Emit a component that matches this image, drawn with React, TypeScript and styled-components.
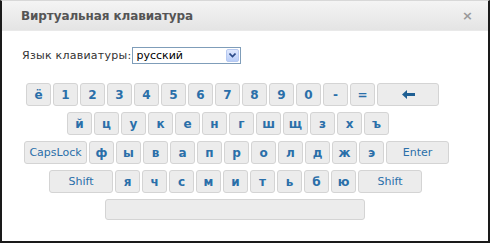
import { FC } from "react";
import styled, { createGlobalStyle } from "styled-components";

const GlobalStyle = createGlobalStyle`
  html, body {
    margin: 0;
    padding: 0;
    background: #ffffff;
  }
  body {
    font-family: "DejaVu Sans", Verdana, sans-serif;
  }
`;

const Window = styled.div`
  box-sizing: border-box;
  width: 490px;
  height: 243px;
  border: 2px solid #1a1a1a;
  border-top: 1px solid #d8d8d8;
  background: #ffffff;
  display: flex;
  flex-direction: column;
`;

const TitleBar = styled.div`
  height: 29px;
  flex-shrink: 0;
  display: flex;
  align-items: center;
  justify-content: space-between;
  padding: 0 15px 0 19px;
  background: linear-gradient(#f4f4f4, #e4e4e4);
  border-bottom: 1px solid #e9e9e9;
`;

const Title = styled.span`
  font-family: "DejaVu Sans", Tahoma, sans-serif;
  font-weight: bold;
  font-size: 12px;
  color: #555555;
  letter-spacing: -0.1px;
`;

const Close = styled.span`
  font-family: "DejaVu Sans", sans-serif;
  font-weight: bold;
  font-size: 13px;
  color: #9a9a9a;
  line-height: 1;
`;

const Body = styled.div`
  padding: 16px 0 0 0;
  display: flex;
  flex-direction: column;
`;

const LangRow = styled.div`
  display: flex;
  align-items: center;
  padding-left: 20px;
  height: 17px;
`;

const Label = styled.span`
  font-size: 11px;
  color: #333333;
  letter-spacing: 0.25px;
`;

const SelectBox = styled.div`
  box-sizing: border-box;
  margin-left: 1px;
  width: 109px;
  height: 17px;
  border: 1px solid #7f9db9;
  display: flex;
  align-items: center;
  justify-content: space-between;
  padding: 1px 1px 1px 3px;
  background: #fff;
`;

const SelectText = styled.span`
  font-size: 11px;
  color: #000;
  line-height: 1;
`;

const SelectArrow = styled.span`
  box-sizing: border-box;
  width: 13px;
  height: 13px;
  border: 1px solid #b7c9f0;
  border-radius: 2px;
  background: linear-gradient(#dfe8fd, #b9cdf8);
  display: flex;
  align-items: center;
  justify-content: center;
`;

const Keyboard = styled.div`
  margin-top: 19px;
  display: flex;
  flex-direction: column;
  gap: 6px;
`;

const Row = styled.div<{ $indent: number }>`
  display: flex;
  gap: 2px;
  padding-left: ${(p) => p.$indent}px;
`;

const Key = styled.div<{ $w?: number; $h?: number; $plain?: boolean }>`
  box-sizing: border-box;
  width: ${(p) => p.$w ?? 25}px;
  height: ${(p) => p.$h ?? 23}px;
  border: 1px solid #d4d4d4;
  border-radius: 3px;
  background: #ececec;
  display: flex;
  align-items: center;
  justify-content: center;
  color: #2a6fa9;
  font-family: "DejaVu Sans", Tahoma, sans-serif;
  font-weight: ${(p) => (p.$plain ? "normal" : "bold")};
  font-size: ${(p) => (p.$plain ? 11 : 12)}px;
  line-height: 1;
`;

const BackArrow: FC = () => (
  <svg width="13" height="9" viewBox="0 0 13 9">
    <path d="M0 4.5 L5 0 L5 3 L13 3 L13 6 L5 6 L5 9 Z" fill="#1f5f93" />
  </svg>
);

const ChevronDown: FC = () => (
  <svg width="7" height="5" viewBox="0 0 7 5">
    <path d="M0.5 0.5 L3.5 3.5 L6.5 0.5" stroke="#2b4a88" strokeWidth="1.6" fill="none" />
  </svg>
);

const row1 = ["ё", "1", "2", "3", "4", "5", "6", "7", "8", "9", "0", "-", "="];
const row2 = ["й", "ц", "у", "к", "е", "н", "г", "ш", "щ", "з", "х", "ъ"];
const row3 = ["ф", "ы", "в", "а", "п", "р", "о", "л", "д", "ж", "э"];
const row4 = ["я", "ч", "с", "м", "и", "т", "ь", "б", "ю"];

const App: FC = () => {
  return (
    <>
      <GlobalStyle />
      <Window>
        <TitleBar>
          <Title>Виртуальная клавиатура</Title>
          <Close>×</Close>
        </TitleBar>
        <Body>
          <LangRow>
            <Label>Язык клавиатуры:</Label>
            <SelectBox>
              <SelectText>русский</SelectText>
              <SelectArrow>
                <ChevronDown />
              </SelectArrow>
            </SelectBox>
          </LangRow>
          <Keyboard>
            <Row $indent={24}>
              {row1.map((k) => (
                <Key key={k}>{k}</Key>
              ))}
              <Key $w={62}>
                <BackArrow />
              </Key>
            </Row>
            <Row $indent={65}>
              {row2.map((k) => (
                <Key key={k}>{k}</Key>
              ))}
            </Row>
            <Row $indent={22}>
              <Key $w={63} $plain>
                CapsLock
              </Key>
              {row3.map((k) => (
                <Key key={k}>{k}</Key>
              ))}
              <Key $w={63} $plain>
                Enter
              </Key>
            </Row>
            <Row $indent={47}>
              <Key $w={64} $plain>
                Shift
              </Key>
              {row4.map((k) => (
                <Key key={k}>{k}</Key>
              ))}
              <Key $w={64} $plain>
                Shift
              </Key>
            </Row>
            <Row $indent={103}>
              <Key $w={260} $h={21} />
            </Row>
          </Keyboard>
        </Body>
      </Window>
    </>
  );
};

export default App;
